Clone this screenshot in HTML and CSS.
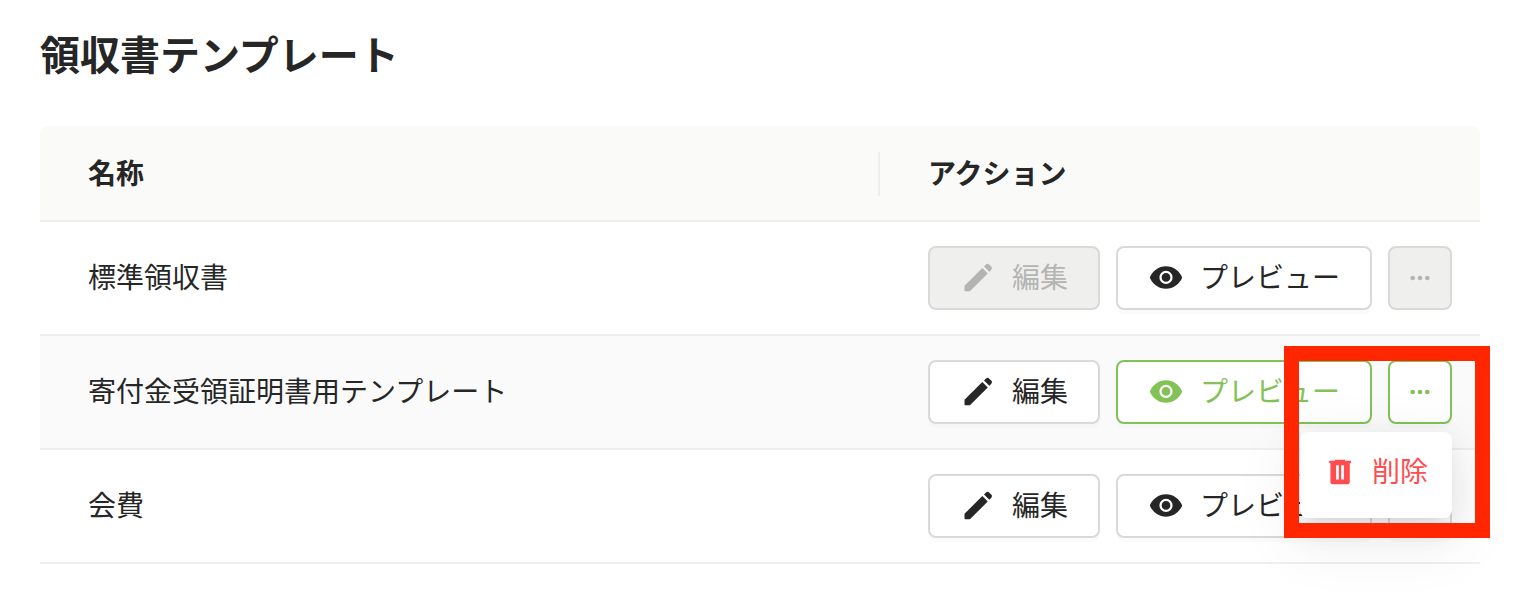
FILE: index.html
```html
<!DOCTYPE html>
<html lang="ja">
<head>
    <meta charset="utf-8">
    <meta name="viewport" content="width=device-width, initial-scale=1">
    <title>領収書テンプレート</title>
    <link rel="stylesheet" href="styles.css">
</head>
<body>
    <!-- shared icons -->
    <svg class="icon-defs" aria-hidden="true">
        <symbol id="icon-pencil" viewBox="0 0 24 24">
            <path d="M3 17.2V20.4a.5.5 0 0 0 .5.5H6.6L18.5 9 14.9 5.4z"/>
            <path d="M16 4.3l3.6 3.6 1.1-1.2c.8-.8.8-1.6.1-2.3l-1.3-1.3c-.7-.7-1.6-.7-2.3 0z"/>
        </symbol>
        <symbol id="icon-eye" viewBox="0 0 24 24">
            <path fill-rule="evenodd" d="M12 4.1C7.1 4.1 3 7.2 1.2 11.6 3 16 7.1 19.1 12 19.1s9-3.1 10.8-7.5C21 7.2 16.9 4.1 12 4.1zM12 7.2a4.4 4.4 0 1 1 0 8.8 4.4 4.4 0 0 1 0-8.8zM12 8.7a2.9 2.9 0 1 0 0 5.8 2.9 2.9 0 0 0 0-5.8z"/>
        </symbol>
        <symbol id="icon-more" viewBox="0 0 28 28">
            <circle cx="6.7" cy="14" r="2.3"/>
            <circle cx="14" cy="14" r="2.3"/>
            <circle cx="21.3" cy="14" r="2.3"/>
        </symbol>
        <symbol id="icon-trash" viewBox="0 0 32 32">
            <path fill-rule="evenodd" d="M11 3.8h10v1h6v2.2h-1.2V26a2.2 2.2 0 0 1-2.2 2.2H8.6A2.2 2.2 0 0 1 6.4 26V7H5.2V4.8H11zM12.1 9.3v14.2h2.7V9.3zM17.2 9.3v14.2h2.7V9.3z"/>
        </symbol>
    </svg>

    <main class="page">
        <h1 class="page-title">領収書テンプレート</h1>
        <table class="table">
            <thead>
                <tr>
                    <th class="col-name"><div class="th-inner">名称</div></th>
                    <th class="col-action"><div class="th-inner">アクション</div></th>
                </tr>
            </thead>
            <tbody>
                <tr>
                    <td><div class="label">標準領収書</div></td>
                    <td>
                        <div class="actions">
                            <button class="btn" type="button" disabled><svg class="icon"><use href="#icon-pencil"/></svg><span class="label">編集</span></button>
                            <button class="btn" type="button"><svg class="icon"><use href="#icon-eye"/></svg><span class="label">プレビュー</span></button>
                            <button class="btn btn-more" type="button" aria-label="その他" disabled><svg class="icon-dots"><use href="#icon-more"/></svg></button>
                        </div>
                    </td>
                </tr>
                <tr class="row-hover">
                    <td><div class="label">寄付金受領証明書用テンプレート</div></td>
                    <td>
                        <div class="actions">
                            <button class="btn" type="button"><svg class="icon"><use href="#icon-pencil"/></svg><span class="label">編集</span></button>
                            <button class="btn btn-active" type="button"><svg class="icon"><use href="#icon-eye"/></svg><span class="label">プレビュー</span></button>
                            <div class="dropdown">
                                <button class="btn btn-more btn-active" type="button" aria-label="その他" aria-haspopup="true" aria-expanded="true"><svg class="icon-dots"><use href="#icon-more"/></svg></button>
                                <div class="menu">
                                    <button class="menu-item" type="button"><svg class="icon-trash"><use href="#icon-trash"/></svg><span class="label">削除</span></button>
                                </div>
                                <div class="highlight"></div>
                            </div>
                        </div>
                    </td>
                </tr>
                <tr>
                    <td><div class="label">会費</div></td>
                    <td>
                        <div class="actions">
                            <button class="btn" type="button"><svg class="icon"><use href="#icon-pencil"/></svg><span class="label">編集</span></button>
                            <button class="btn" type="button"><svg class="icon"><use href="#icon-eye"/></svg><span class="label">プレビュー</span></button>
                            <button class="btn btn-more" type="button" aria-label="その他"><svg class="icon-dots"><use href="#icon-more"/></svg></button>
                        </div>
                    </td>
                </tr>
            </tbody>
        </table>
    </main>
</body>
</html>
```
FILE: styles.css
```css
* {
    box-sizing: border-box;
}

body {
    margin: 0;
    background: #fff;
    color: #262626;
    font-family: "Noto Sans CJK JP", "Noto Sans", sans-serif;
    font-size: 28px;
    line-height: 40px;
}

.icon-defs {
    position: absolute;
    width: 0;
    height: 0;
}

.page {
    padding: 22px 56px 32px 40px;
}

.page-title {
    margin: 0 0 42px;
    font-size: 40px;
    font-weight: 700;
    line-height: 62px;
}

/* table */
.table {
    width: 100%;
    border-collapse: separate;
    border-spacing: 0;
    table-layout: fixed;
}

.table th {
    padding: 26px 0 24px;
    background: #fafaf9;
    border-bottom: 2px solid #efefee;
    font-weight: 700;
    text-align: left;
}

.table th:first-child {
    border-top-left-radius: 8px;
}

.table th:last-child {
    border-top-right-radius: 8px;
}

.th-inner {
    padding: 0 48px 4px;
}

.col-name .th-inner {
    border-right: 2px solid #efefee;
}

.col-action {
    width: 600px;
}

.table td {
    padding: 24px 28px 24px 48px;
    border-bottom: 2px solid #efefee;
}

.row-hover td {
    background: #fafafa;
}

.label {
    padding-bottom: 4px;
}

/* buttons */
.actions {
    display: flex;
    gap: 16px;
}

.btn {
    display: flex;
    align-items: center;
    justify-content: center;
    gap: 16px;
    height: 64px;
    padding: 0 30px;
    border: 2px solid #d9d9d8;
    border-radius: 8px;
    background: #fff;
    box-shadow: 0 4px 0 rgba(0, 0, 0, 0.016);
    color: #262626;
    font: inherit;
    white-space: nowrap;
    cursor: pointer;
}

.btn:disabled {
    background: #efefee;
    box-shadow: none;
    color: #b4b4b3;
    cursor: not-allowed;
}

.btn-active {
    border-color: #82c256;
    color: #82c256;
}

.btn-more {
    width: 64px;
    padding: 0;
}

.icon {
    width: 36px;
    height: 36px;
    fill: currentColor;
}

.icon-dots {
    width: 28px;
    height: 28px;
    fill: currentColor;
}

.icon-trash {
    width: 32px;
    height: 32px;
    fill: currentColor;
}

/* dropdown */
.dropdown {
    position: relative;
}

.menu {
    position: absolute;
    top: 72px;
    right: 0;
    z-index: 1;
    padding: 8px 0 14px;
    border-radius: 8px;
    background: #fff;
    box-shadow: 0 6px 12px -8px rgba(0, 0, 0, 0.12),
        0 12px 32px rgba(0, 0, 0, 0.08),
        0 18px 56px 16px rgba(0, 0, 0, 0.05);
}

.menu-item {
    display: flex;
    align-items: center;
    gap: 16px;
    height: 64px;
    padding: 0 24px;
    border: 0;
    background: none;
    color: #ff4d4f;
    font: inherit;
    white-space: nowrap;
    cursor: pointer;
}

.highlight {
    position: absolute;
    top: -14px;
    right: -38px;
    z-index: 2;
    width: 206px;
    height: 192px;
    border: 15px solid #ff2600;
    pointer-events: none;
}
```
